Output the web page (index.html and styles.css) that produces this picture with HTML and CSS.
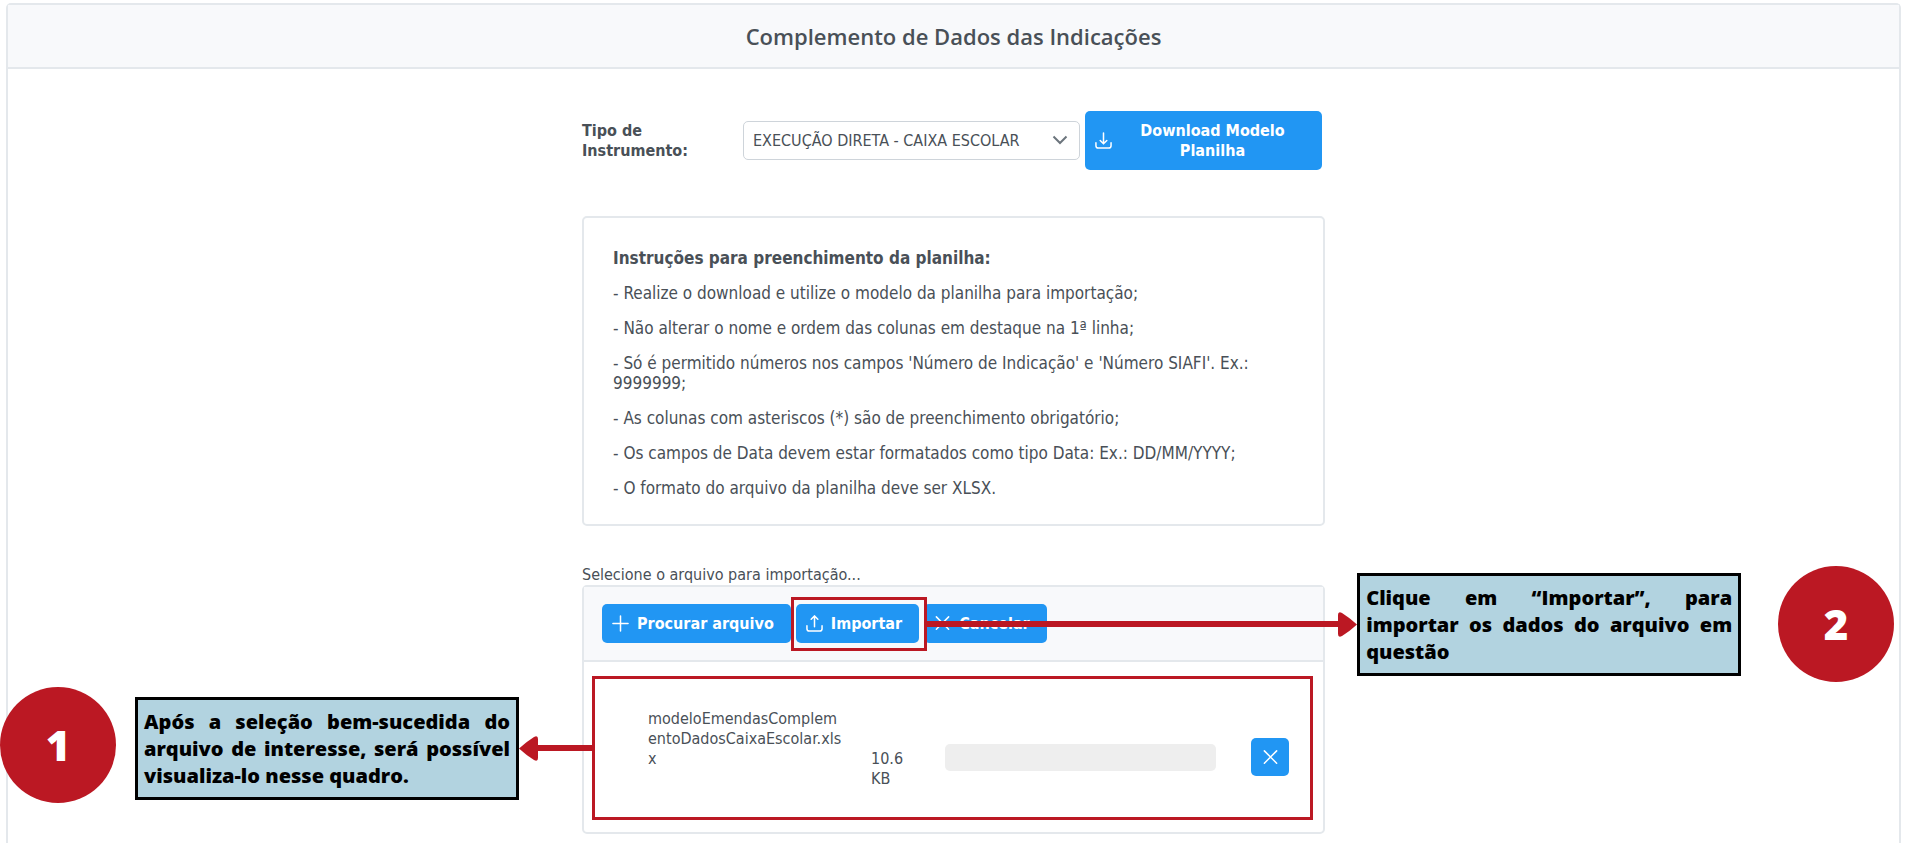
FILE: index.html
```html
<!DOCTYPE html>
<html lang="pt-BR">
<head>
    <meta charset="UTF-8">
    <meta name="viewport" content="width=device-width, initial-scale=1.0">
    <title>Complemento de Dados das Indicações</title>
    <link rel="stylesheet" href="styles.css">
</head>
<body>
    <main class="panel">
        <header class="panel-header">
            <h1>Complemento de Dados das Indicações</h1>
        </header>
        <div class="panel-content">
            <div class="form-row">
                <label for="tipo">Tipo de Instrumento:</label>
                <div class="select-box">
                    <select id="tipo" name="tipo">
                        <option>EXECUÇÃO DIRETA - CAIXA ESCOLAR</option>
                    </select>
                    <svg class="chevron" viewBox="0 0 16 16"><path d="M1.5 4.5 L8 11 L14.5 4.5"/></svg>
                </div>
                <button type="button" class="btn btn-download">
                    <svg class="icon" viewBox="0 0 18 18"><path d="M9 1 V12 M5.5 9 L9 12.5 L12.5 9 M1 11.5 V14.5 Q1 17 3.5 17 H14.5 Q17 17 17 14.5 V11.5"/></svg>
                    <span>Download Modelo Planilha</span>
                </button>
            </div>

            <section class="card">
                <h2>Instruções para preenchimento da planilha:</h2>
                <p>- Realize o download e utilize o modelo da planilha para importação;</p>
                <p>- Não alterar o nome e ordem das colunas em destaque na 1ª linha;</p>
                <p>- Só é permitido números nos campos 'Número de Indicação' e 'Número SIAFI'. Ex.: 9999999;</p>
                <p>- As colunas com asteriscos (*) são de preenchimento obrigatório;</p>
                <p>- Os campos de Data devem estar formatados como tipo Data: Ex.: DD/MM/YYYY;</p>
                <p>- O formato do arquivo da planilha deve ser XLSX.</p>
            </section>

            <div class="upload-title">Selecione o arquivo para importação...</div>
            <section class="upload">
                <div class="upload-bar">
                    <button type="button" class="btn">
                        <svg class="icon" viewBox="0 0 18 18"><path d="M9 1 V17 M1 9 H17"/></svg>
                        <span>Procurar arquivo</span>
                    </button>
                    <div class="step-target">
                        <button type="button" class="btn">
                            <svg class="icon" viewBox="0 0 18 18"><path d="M9 12.5 V1.5 M5.5 4.5 L9 1 L12.5 4.5 M1 11.5 V14.5 Q1 17 3.5 17 H14.5 Q17 17 17 14.5 V11.5"/></svg>
                            <span>Importar</span>
                        </button>
                        <div class="mark"></div>
                        <div class="step step-right">
                            <div class="arrow">
                                <div class="line"></div>
                                <svg class="head" viewBox="0 0 19 25"><path d="M0 3 Q0 -1 4 1 Q12 6 19 12.5 Q12 19 4 24 Q0 26 0 22 Z"/></svg>
                            </div>
                            <p class="note">Clique em “Importar”, para importar os dados do arquivo em questão</p>
                            <div class="number">2</div>
                        </div>
                    </div>
                    <button type="button" class="btn">
                        <svg class="icon" viewBox="0 0 18 18"><path d="M2.5 2 L15.5 15 M15.5 2 L2.5 15"/></svg>
                        <span>Cancelar</span>
                    </button>
                </div>
                <div class="upload-content">
                    <div class="file-row">
                        <div class="file-name">modeloEmendasComplementoDadosCaixaEscolar.xlsx</div>
                        <div class="file-size">10.6 KB</div>
                        <progress value="0" max="100" aria-label="Progresso"></progress>
                        <button type="button" class="btn btn-remove" aria-label="Remover">
                            <svg class="icon" viewBox="0 0 18 18"><path d="M2.5 2 L15.5 15 M15.5 2 L2.5 15"/></svg>
                        </button>
                    </div>
                    <div class="mark mark-file"></div>
                    <div class="step step-left">
                        <div class="number">1</div>
                        <p class="note">Após a seleção bem-sucedida do arquivo de interesse, será possível visualiza-lo nesse quadro.</p>
                        <div class="arrow">
                            <svg class="head" viewBox="0 0 19 25"><path d="M19 3 Q19 -1 15 1 Q7 6 0 12.5 Q7 19 15 24 Q19 26 19 22 Z"/></svg>
                            <div class="line"></div>
                        </div>
                    </div>
                </div>
            </section>
        </div>
    </main>
</body>
</html>
```
FILE: styles.css
```css
* {
    box-sizing: border-box;
}
body {
    margin: 0;
    padding: 3px 9px 0 6px;
    min-height: 100vh;
    display: flex;
    overflow-x: hidden;
    background-color: #fff;
    color: #495057;
    font-family: "DejaVu Sans Condensed", "Noto Sans", sans-serif;
    font-size: 16px;
    line-height: 20px;
}
h1, h2, p {
    margin: 0;
}
.panel {
    flex: 1;
    border: 2px solid #e4e8ec;
    border-bottom: none;
    border-radius: 5px 5px 0 0;
}
.panel-header {
    padding: 17px;
    border-bottom: 2px solid #e4e8ec;
    background-color: #f8f9fb;
    text-align: center;
}
.panel-header h1 {
    font-family: "Open Sans", sans-serif;
    font-size: 22px;
    font-weight: 600;
    line-height: 28px;
}
.panel-content {
    max-width: 743px;
    margin: 0 auto;
    padding-top: 42px;
}
.form-row {
    display: flex;
    align-items: center;
    gap: 5px;
    padding-right: 3px;
    margin-bottom: 46px;
}
.form-row label {
    width: 156px;
    padding-right: 30px;
    font-weight: bold;
}
.select-box {
    position: relative;
    flex: 1;
}
.select-box select {
    width: 100%;
    height: 39px;
    padding: 0 9px;
    border: 1px solid #ced4da;
    border-radius: 5px;
    background-color: #fff;
    color: #495057;
    font-family: inherit;
    font-size: 16px;
    appearance: none;
}
.chevron {
    position: absolute;
    right: 12px;
    top: 11px;
    width: 16px;
    height: 16px;
    fill: none;
    stroke: #6c757d;
    stroke-width: 2;
    pointer-events: none;
}
.btn {
    display: flex;
    align-items: center;
    gap: 8px;
    height: 39px;
    padding: 0 17px 0 10px;
    border: none;
    border-radius: 5px;
    background-color: #2196f3;
    color: #fff;
    font-family: inherit;
    font-size: 16px;
    font-weight: bold;
    line-height: 20px;
    cursor: pointer;
}
.btn span {
    flex: 1;
}
.icon {
    flex: none;
    width: 17px;
    height: 17px;
    fill: none;
    stroke: #fff;
    stroke-width: 1.6;
    stroke-linecap: round;
}
.btn-download {
    width: 237px;
    height: 59px;
}
.card {
    padding: 30px 29px 26px;
    border: 2px solid #e4e8ec;
    border-radius: 5px;
    font-size: 17px;
}
.card h2 {
    margin-bottom: 15px;
    font-size: 17px;
}
.card p {
    margin-bottom: 15px;
}
.card p:last-child {
    margin-bottom: 0;
}
.upload-title {
    margin-top: 39px;
}
.upload {
    border: 2px solid #e4e8ec;
    border-radius: 5px;
}
.upload-bar {
    display: flex;
    gap: 5px;
    padding: 17px 18px;
    border-bottom: 2px solid #e4e8ec;
    background-color: #f8f9fb;
}
.upload-content {
    position: relative;
    padding: 47px 34px 27px 64px;
}
.file-row {
    display: grid;
    grid-template-columns: 223px 74px 1fr 38px;
    align-items: center;
    min-height: 96px;
}
.file-name {
    align-self: start;
    padding-right: 27px;
    word-break: break-all;
}
.file-size {
    align-self: start;
    padding: 40px 30px 0 0;
}
.file-row progress {
    width: calc(100% - 35px);
    height: 27px;
    border: none;
    border-radius: 5px;
    background-color: #eee;
    appearance: none;
}
.file-row progress::-webkit-progress-bar {
    background-color: transparent;
}
.btn-remove {
    justify-content: center;
    height: 38px;
    padding: 0;
}

/* tutorial marks */
.step-target {
    position: relative;
}
.mark {
    position: absolute;
    inset: -7px -8px -8px -5px;
    border: 3px solid #bb1823;
    pointer-events: none;
}
.mark-file {
    inset: 14px 10px 12px 8px;
}
.step {
    position: absolute;
    z-index: 1;
    display: flex;
    align-items: center;
}
.step-right {
    left: calc(100% + 8px);
    top: -38px;
}
.step-left {
    right: calc(100% - 9px);
    top: 25px;
}
.arrow {
    display: flex;
    align-items: center;
    width: 430px;
}
.step-left .arrow {
    width: 74px;
}
.arrow .line {
    flex: 1;
    height: 6px;
    background-color: #bb1823;
}
.arrow .head {
    width: 19px;
    height: 25px;
    fill: #bb1823;
}
.note {
    width: 384px;
    padding: 8px 6px;
    border: 3px solid #000;
    background-color: #b2d3e0;
    color: #000;
    font-family: "Open Sans", sans-serif;
    font-size: 20px;
    font-weight: 800;
    line-height: 27px;
    text-align: justify;
}
.number {
    display: flex;
    align-items: center;
    justify-content: center;
    width: 116px;
    height: 116px;
    border-radius: 50%;
    background-color: #bb1823;
    color: #fff;
    font-family: "Open Sans", sans-serif;
    font-size: 42px;
    font-weight: 800;
}
.step-right .number {
    margin-left: 37px;
}
.step-left .number {
    margin: 0 19px 6px 0;
}
```
